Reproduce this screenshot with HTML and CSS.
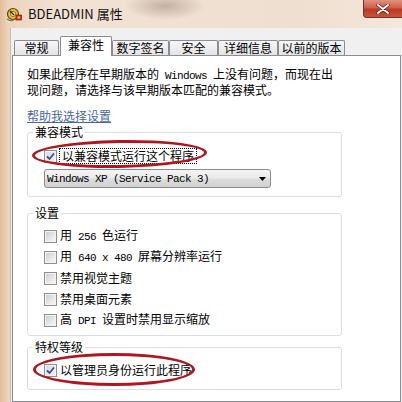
FILE: index.html
```html
<!DOCTYPE html>
<html lang="zh-CN">
<head>
  <meta charset="UTF-8">
  <title>BDEADMIN 属性</title>
  <link rel="stylesheet" href="styles.css">
</head>
<body>
  <div class="window">
    <div class="titlebar">
      <svg class="app-icon" viewBox="0 0 16 16" width="16" height="16">
        <circle cx="7" cy="8" r="5.5" fill="#e6c22e" stroke="#5a4410" stroke-width="1.2"/>
        <circle cx="7" cy="8" r="2.6" fill="#f6e7a0" stroke="#7a5a10" stroke-width="0.8"/>
        <path d="M4 5 L8 9" stroke="#222" stroke-width="1.3"/>
        <rect x="10" y="9" width="5.5" height="5" fill="#d2321e" stroke="#7a1a10" stroke-width="0.7"/>
        <rect x="11.5" y="10.5" width="2.5" height="2" fill="#f4c0a0"/>
        <path d="M1 13 Q4 15.5 8 14" stroke="#7a7a7a" stroke-width="1.2" fill="none"/>
      </svg>
      <span class="title">BDEADMIN 属性</span>
      <div class="close">
        <svg viewBox="0 0 14 10" width="14" height="10">
          <path d="M2 1 L12 9 M12 1 L2 9" stroke="#5a1a12" stroke-width="3.4" stroke-linecap="round"/>
          <path d="M2 1 L12 9 M12 1 L2 9" stroke="#ffffff" stroke-width="2" stroke-linecap="round"/>
        </svg>
      </div>
    </div>

    <div class="frame">
      <div class="dialog">
        <div class="tabs">
          <div class="tab tab-general">常规</div>
          <div class="tab tab-compat active">兼容性</div>
          <div class="tab tab-sign">数字签名</div>
          <div class="tab tab-security">安全</div>
          <div class="tab tab-details">详细信息</div>
          <div class="tab tab-prev">以前的版本</div>
        </div>

        <div class="panel">
          <p class="intro">如果此程序在早期版本的<span class="en"> Windows </span>上没有问题，而现在出<br>现问题，请选择与该早期版本匹配的兼容模式。</p>
          <a class="help" href="#">帮助我选择设置</a>

          <fieldset class="group group-compat">
            <legend>兼容模式</legend>
            <div class="check">
              <span class="box checked">
                <svg viewBox="0 0 11 11" width="11" height="11"><path d="M2 5.5 L4.5 8 L9 2.5" stroke="#3d4f8c" stroke-width="1.8" fill="none"/></svg>
              </span>
              <span class="focus">以兼容模式运行这个程序</span>
              <span class="mark mark-compat"></span>
            </div>
            <div class="select">
              <span class="en">Windows XP (Service Pack 3)</span>
              <svg class="arrow" viewBox="0 0 7 4" width="7" height="4"><path d="M0 0 H7 L3.5 4 Z" fill="#000"/></svg>
            </div>
          </fieldset>

          <fieldset class="group group-settings">
            <legend>设置</legend>
            <div class="rows">
              <div class="check"><span class="box"></span><span>用<span class="en"> 256 </span>色运行</span></div>
              <div class="check"><span class="box"></span><span>用<span class="en"> 640 x 480 </span>屏幕分辨率运行</span></div>
              <div class="check"><span class="box"></span><span>禁用视觉主题</span></div>
              <div class="check"><span class="box"></span><span>禁用桌面元素</span></div>
              <div class="check"><span class="box"></span><span>高<span class="en"> DPI </span>设置时禁用显示缩放</span></div>
            </div>
          </fieldset>

          <fieldset class="group group-priv">
            <legend>特权等级</legend>
            <div class="check">
              <span class="box checked">
                <svg viewBox="0 0 11 11" width="11" height="11"><path d="M2 5.5 L4.5 8 L9 2.5" stroke="#3d4f8c" stroke-width="1.8" fill="none"/></svg>
              </span>
              <span class="plain">以管理员身份运行此程序</span>
              <span class="mark mark-admin"></span>
            </div>
          </fieldset>
        </div>
      </div>
    </div>
  </div>
</body>
</html>
```

FILE: styles.css
```css
* {
  box-sizing: border-box;
}
body {
  margin: 0;
  width: 402px;
  height: 402px;
  overflow: hidden;
  font-family: "Noto Sans CJK SC", sans-serif;
  font-size: 12px;
  color: #000;
  background: #ead6c2;
}
.window {
  height: 402px;
  display: flex;
  flex-direction: column;
  background:
    radial-gradient(ellipse 40px 14px at 165px 6px, rgba(150, 130, 115, 0.5), rgba(150, 130, 115, 0)),
    linear-gradient(90deg, #e4bc98 0, #ecd4be 8px, #f1e2d4 60px, #efdfd0 300px, #f4e7dc 402px);
}

/* Title bar */
.titlebar {
  height: 28px;
  display: flex;
  align-items: center;
  padding-left: 6px;
  flex: none;
}
.app-icon {
  flex: none;
}
.title {
  margin-left: 6px;
  line-height: 16px;
  font-size: 13px;
  color: #111;
}
.close {
  margin-left: auto;
  align-self: flex-start;
  width: 39px;
  height: 18px;
  display: flex;
  align-items: center;
  justify-content: center;
  background: linear-gradient(#e09080 0, #d0604a 45%, #bb3a24 55%, #c65238 100%);
  border: 1px solid #7c3328;
  border-top: none;
  border-right: none;
  border-radius: 0 0 0 4px;
}

/* Dialog body */
.frame {
  flex: 1;
  display: flex;
  padding-left: 10px;
}
.dialog {
  flex: 1;
  display: flex;
  flex-direction: column;
  background: #f0f0f0;
  border-left: 1px solid #c9bfb5;
  padding: 8px 1px 0 1px;
}
.tabs {
  display: flex;
  align-items: flex-end;
  height: 19px;
  padding-left: 2px;
}
.tab {
  height: 15px;
  line-height: 13px;
  text-align: center;
  border: 1px solid #898c95;
  border-bottom: none;
  border-radius: 2px 2px 0 0;
  background: linear-gradient(#f6f6f6, #e4e4e4);
}
.tab.active {
  height: 20px;
  margin: 0 0 -1px 1px;
  padding-bottom: 3px;
  line-height: 15px;
  background: #fff;
  position: relative;
  z-index: 1;
}
.tab-general { width: 45px; }
.tab-compat { width: 52px; }
.tab-sign { width: 57px; }
.tab-security { width: 49px; }
.tab-details { width: 60px; }
.tab-prev { width: 67px; }

.panel {
  flex: 1;
  background: #fff;
  border: 1px solid #898c95;
  padding: 11px 0 0 14px;
}
.en {
  font-family: "Liberation Mono", monospace;
  font-size: 11px;
  letter-spacing: -0.6px;
  white-space: pre;
}
.intro {
  margin: 0;
  line-height: 13px;
}
.help {
  display: block;
  width: max-content;
  margin-top: 13px;
  line-height: 14px;
  color: #4a66a0;
  text-decoration: underline;
}

/* Group boxes */
.group {
  width: 315px;
  margin: 0;
  border: 1px solid #d5dfe5;
  border-radius: 3px;
  padding: 0 0 0 16px;
}
.group legend {
  padding: 0 2px;
  margin-left: -11px;
  line-height: 14px;
}
.group-compat {
  margin-top: 2px;
  padding-bottom: 8px;
}
.group-compat .check {
  margin-top: 9px;
}
.group-settings {
  margin-top: 9px;
  padding-bottom: 7px;
}
.group-settings .rows {
  display: flex;
  flex-direction: column;
  gap: 5px;
  margin-top: 8px;
}
.group-priv {
  margin-top: 4px;
  padding-bottom: 11px;
}
.group-priv .check {
  margin-top: 8px;
}

/* Check boxes */
.check {
  position: relative;
  display: flex;
  align-items: center;
  height: 16px;
}
.box {
  flex: none;
  width: 13px;
  height: 13px;
  margin-right: 1px;
  border: 1px solid #8e8f8f;
  background: linear-gradient(135deg, #c6cad0, #eeeeee 70%, #f6f6f6);
  box-shadow: inset 0 0 0 1px #f3f3f3;
  display: flex;
  align-items: center;
  justify-content: center;
}
.box.checked {
  background: linear-gradient(135deg, #d6d9de, #f4f4f4);
}
.check > span:not(.box) {
  line-height: 14px;
  padding-left: 2px;
}
.check .focus {
  border: 1px dotted #000;
  padding: 0 2px 0 1px;
  margin-left: 1px;
}

/* Red hand-drawn marks */
.mark {
  position: absolute;
  border: 3px solid #b0161e;
  border-radius: 50%;
  pointer-events: none;
}
.mark-compat {
  left: -12px;
  top: -8px;
  width: 175px;
  height: 28px;
  transform: rotate(-1deg);
}
.mark-admin {
  left: -11px;
  top: -9px;
  width: 162px;
  height: 33px;
}

/* Drop-down */
.select {
  margin-top: 5px;
  width: 227px;
  height: 19px;
  display: flex;
  align-items: center;
  padding: 0 4px 0 2px;
  border: 1px solid #8a8a8a;
  border-radius: 3px;
  background: linear-gradient(#f4f4f4, #ebebeb 45%, #dcdcdc 55%, #d2d2d2);
}
.select .arrow {
  margin-left: auto;
}
```
